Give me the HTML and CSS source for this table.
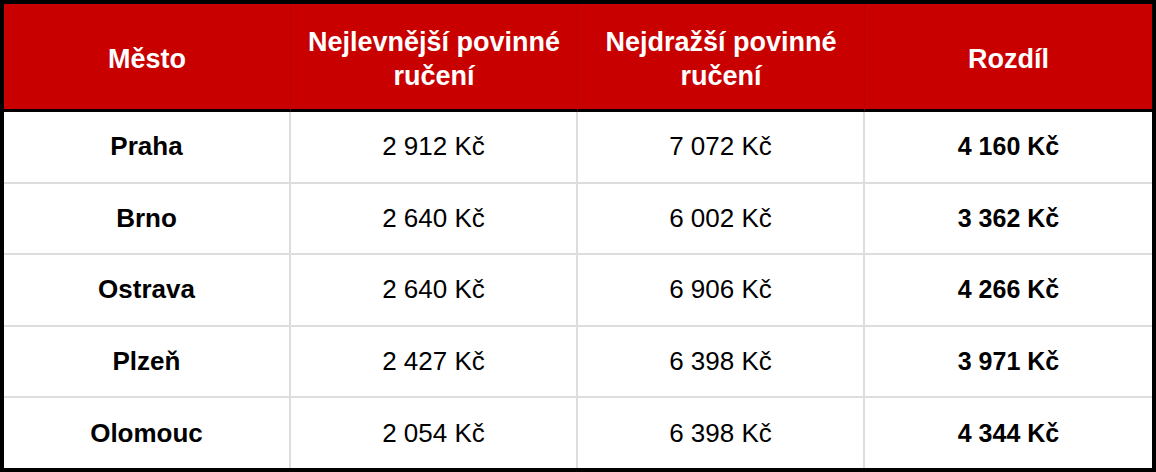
FILE: index.html
```html
<!DOCTYPE html>
<html lang="cs">
<head>
<meta charset="utf-8">
<link rel="stylesheet" href="styles.css">
</head>
<body>
<table class="price-table">
  <colgroup>
    <col class="c"><col class="c"><col class="c"><col class="c">
  </colgroup>
  <thead>
    <tr>
      <th>Město</th>
      <th>Nejlevnější povinné ručení</th>
      <th>Nejdražší povinné ručení</th>
      <th>Rozdíl</th>
    </tr>
  </thead>
  <tbody>
    <tr><td class="city">Praha</td><td>2 912 Kč</td><td>7 072 Kč</td><td class="diff">4 160 Kč</td></tr>
    <tr><td class="city">Brno</td><td>2 640 Kč</td><td>6 002 Kč</td><td class="diff">3 362 Kč</td></tr>
    <tr><td class="city">Ostrava</td><td>2 640 Kč</td><td>6 906 Kč</td><td class="diff">4 266 Kč</td></tr>
    <tr><td class="city">Plzeň</td><td>2 427 Kč</td><td>6 398 Kč</td><td class="diff">3 971 Kč</td></tr>
    <tr><td class="city">Olomouc</td><td>2 054 Kč</td><td>6 398 Kč</td><td class="diff">4 344 Kč</td></tr>
  </tbody>
</table>
</body>
</html>
```

FILE: styles.css
```css
html, body {
  margin: 0;
  padding: 0;
  background: #ffffff;
}
body {
  font-family: "Liberation Sans", Arial, Helvetica, sans-serif;
}
.price-table {
  width: 1156px;
  height: 472px;
  border-collapse: separate;
  border-spacing: 0;
  border: 4px solid #000;
  table-layout: fixed;
  box-sizing: border-box;
}
.price-table th {
  background: #c80000;
  color: #fff;
  font-weight: bold;
  font-size: 27px;
  line-height: 34px;
  height: 108px;
  padding: 4px 8px 0;
  text-align: center;
  vertical-align: middle;
  border-bottom: 3px solid #000;
  border-right: 1px solid #b80000;
  box-sizing: border-box;
}
.price-table th:last-child {
  border-right: none;
}
.price-table td {
  font-size: 26px;
  color: #000;
  text-align: center;
  vertical-align: middle;
  height: 69px;
  padding: 0;
  border-right: 2px solid #dddddd;
  border-bottom: 2px solid #dddddd;
}
.price-table td:last-child {
  border-right: none;
}
.price-table tbody tr:last-child td {
  border-bottom: none;
}
.price-table td.city,
.price-table td.diff {
  font-weight: bold;
}
.price-table td.diff {
  font-size: 25px;
}
```
